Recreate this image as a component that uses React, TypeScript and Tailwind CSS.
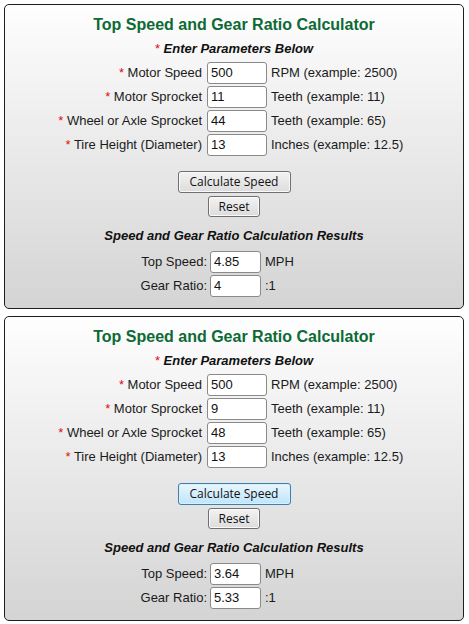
import React from "react";

type Row = { label: string; value: string; unit: string };

function Panel({ sprocket, wheel, speed, ratio, focused }: { sprocket: string; wheel: string; speed: string; ratio: string; focused?: boolean }) {
  const rows: Row[] = [
    { label: "Motor Speed", value: "500", unit: "RPM (example: 2500)" },
    { label: "Motor Sprocket", value: sprocket, unit: "Teeth (example: 11)" },
    { label: "Wheel or Axle Sprocket", value: wheel, unit: "Teeth (example: 65)" },
    { label: "Tire Height (Diameter)", value: "13", unit: "Inches (example: 12.5)" },
  ];
  return (
    <div className="w-[460px] h-[305px] rounded-[5px] border border-[#1e1e1e] bg-gradient-to-b from-[#fefefe] to-[#d4d4d4] flex flex-col">
      <div className="pt-[10px] text-center text-[16px] leading-[20px] font-bold text-[#0d6a35]">
        Top Speed and Gear Ratio Calculator
      </div>
      <div className="mt-[6px] text-center text-[13px] leading-[16px] font-bold italic text-[#111]">
        <span className="text-[#e01010] not-italic font-normal">*</span> Enter Parameters Below
      </div>
      <div className="mt-[5px] flex flex-col gap-[2px]">
        {rows.map((r) => (
          <div key={r.label} className="flex items-center h-[22px] text-[13px] text-[#1a1a1a]">
            <div className="w-[197px] text-right whitespace-nowrap">
              <span className="text-[#e01010]">*</span> {r.label}
            </div>
            <div className="ml-[5px] w-[60px] h-[22px] rounded-[3px] border border-[#8a8a8a] bg-white pl-[3px] flex items-center text-[13px] text-[#111]">
              {r.value}
            </div>
            <div className="ml-[4px] whitespace-nowrap">{r.unit}</div>
          </div>
        ))}
      </div>
      <div className="mt-[15px] flex justify-center">
        <div
          className={
            focused
              ? "w-[113px] h-[22px] rounded-[3px] border border-[#3c7fb1] bg-gradient-to-b from-[#eaf6fd] to-[#bde5fb] flex items-center justify-center text-[12px] text-[#111] font-['Open_Sans',sans-serif] shadow-[inset_0_0_0_1px_#d8effc]"
              : "w-[113px] h-[22px] rounded-[3px] border border-[#707070] bg-gradient-to-b from-[#f3f3f3] to-[#dcdcdc] flex items-center justify-center text-[12px] text-[#111] font-['Open_Sans',sans-serif] shadow-[inset_0_0_0_1px_#fafafa]"
          }
        >
          Calculate Speed
        </div>
      </div>
      <div className="mt-[3px] flex justify-center">
        <div className="w-[52px] h-[21px] rounded-[3px] border border-[#707070] bg-gradient-to-b from-[#f3f3f3] to-[#dcdcdc] flex items-center justify-center text-[12px] text-[#111] font-['Open_Sans',sans-serif] shadow-[inset_0_0_0_1px_#fafafa]">
          Reset
        </div>
      </div>
      <div className="mt-[11px] text-center text-[13px] leading-[16px] font-bold italic text-[#111]">
        Speed and Gear Ratio Calculation Results
      </div>
      <div className="mt-[7px] flex flex-col gap-[2px]">
        {[
          { label: "Top Speed:", value: speed, unit: "MPH" },
          { label: "Gear Ratio:", value: ratio, unit: ":1" },
        ].map((r) => (
          <div key={r.label} className="flex items-center h-[22px] text-[13px] text-[#1a1a1a]">
            <div className="w-[202px] text-right whitespace-nowrap">{r.label}</div>
            <div className="ml-[3px] w-[51px] h-[22px] rounded-[3px] border border-[#8a8a8a] bg-white pl-[3px] flex items-center text-[13px] text-[#111]">
              {r.value}
            </div>
            <div className="ml-[4px] whitespace-nowrap">{r.unit}</div>
          </div>
        ))}
      </div>
    </div>
  );
}

export default function App() {
  return (
    <div className="w-[469px] h-[624px] bg-white pl-[4px] pt-[4px] flex flex-col gap-[7px] font-['Liberation_Sans',Arial,sans-serif]">
      <Panel sprocket="11" wheel="44" speed="4.85" ratio="4" />
      <Panel sprocket="9" wheel="48" speed="3.64" ratio="5.33" focused />
    </div>
  );
}
